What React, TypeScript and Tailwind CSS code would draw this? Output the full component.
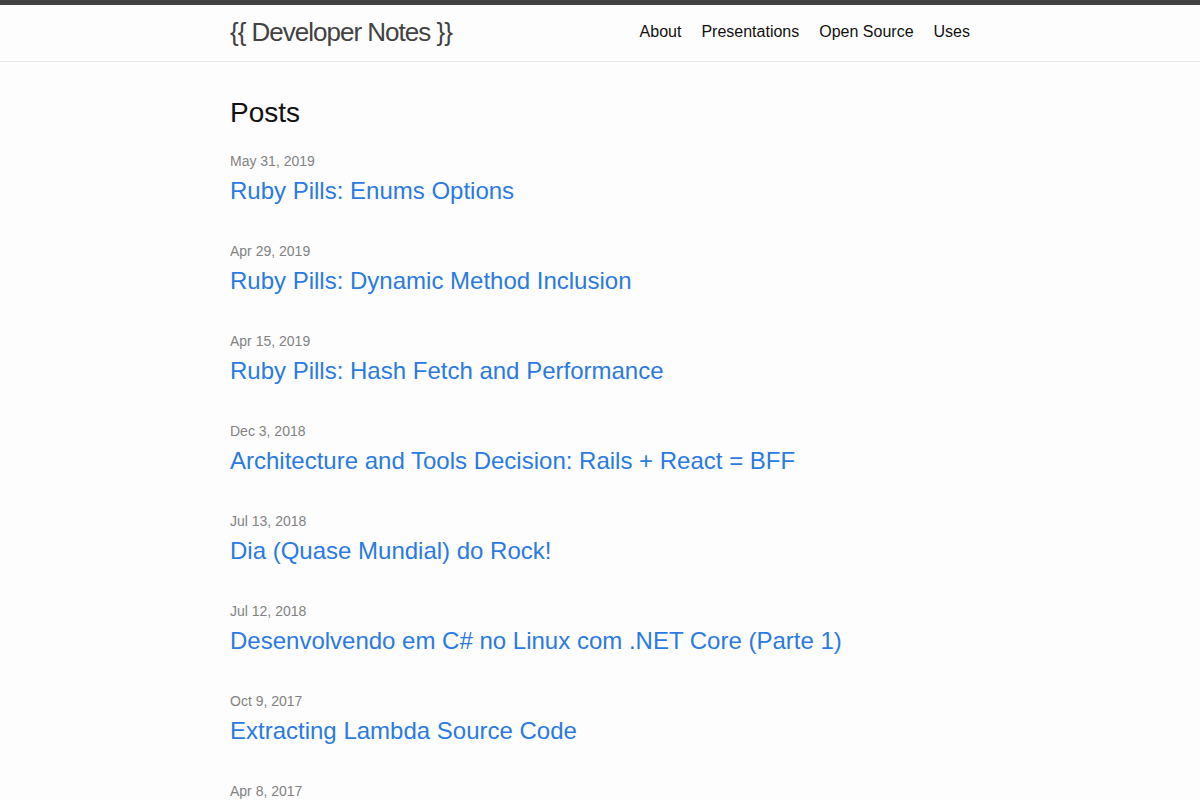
import React from 'react';

const posts = [
  { date: 'May 31, 2019', title: 'Ruby Pills: Enums Options' },
  { date: 'Apr 29, 2019', title: 'Ruby Pills: Dynamic Method Inclusion' },
  { date: 'Apr 15, 2019', title: 'Ruby Pills: Hash Fetch and Performance' },
  { date: 'Dec 3, 2018', title: 'Architecture and Tools Decision: Rails + React = BFF' },
  { date: 'Jul 13, 2018', title: 'Dia (Quase Mundial) do Rock!' },
  { date: 'Jul 12, 2018', title: 'Desenvolvendo em C# no Linux com .NET Core (Parte 1)' },
  { date: 'Oct 9, 2017', title: 'Extracting Lambda Source Code' },
  { date: 'Apr 8, 2017', title: 'Ruby Pills: Safe Navigation Operator' },
];

const navItems = ['About', 'Presentations', 'Open Source', 'Uses'];

export default function App() {
  return (
    <div className="min-h-screen bg-[#fdfdfd] text-[#111] font-['Liberation_Sans',Arial,sans-serif] leading-normal">
      <header className="border-t-[5px] border-t-[#424242] border-b border-b-[#e8e8e8] h-[62px]">
        <div className="max-w-[800px] mx-auto px-[30px] flex items-center justify-between">
          <a href="#" className="text-[26px] leading-[54px] tracking-[-1px] text-[#424242]">
            {'{{ Developer Notes }}'}
          </a>
          <nav className="flex items-center gap-5 leading-[54px]">
            {navItems.map((item) => (
              <a key={item} href="#" className="text-base text-[#111]">
                {item}
              </a>
            ))}
          </nav>
        </div>
      </header>
      <main className="max-w-[800px] mx-auto px-[30px] pt-[30px]">
        <h2 className="text-[28px] leading-[42px] mb-[17px]">Posts</h2>
        <ul>
          {posts.map((post) => (
            <li key={post.title} className="h-[90px]">
              <span className="block h-[22px] text-sm leading-[21px] text-[#828282]">{post.date}</span>
              <h3 className="text-2xl leading-[36px]">
                <a href="#" className="text-[#2a7ae2]">
                  {post.title}
                </a>
              </h3>
            </li>
          ))}
        </ul>
      </main>
    </div>
  );
}
